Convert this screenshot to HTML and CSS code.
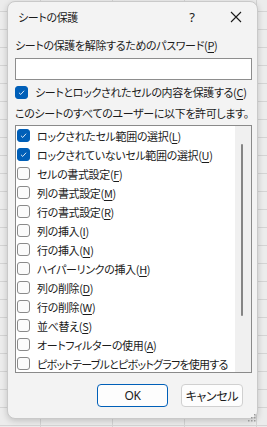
FILE: index.html
```html
<!DOCTYPE html>
<html lang="ja">
<head>
<meta charset="utf-8">
<link rel="stylesheet" href="styles.css">
</head>
<body>
<div class="desk">
  <div class="dialog">
    <div class="titlebar">
      <span class="title">シートの保護</span>
      <span class="help">?</span>
      <span class="close"><svg width="12" height="12" viewBox="0 0 12 12"><path d="M1 1L11 11M11 1L1 11" stroke="#1a1a1a" stroke-width="1.1" fill="none"/></svg></span>
    </div>
    <div class="body">
      <div class="label">シートの保護を解除するためのパスワード(<u>P</u>)</div>
      <div class="input"></div>
      <div class="row main-check"><span class="cb on"><svg viewBox="0 0 13 13"><path d="M3.5 6.8L5.6 8.8L9.6 4.4" stroke="#fff" stroke-width="1" fill="none"/></svg></span><span>シートとロックされたセルの内容を保護する(<u>C</u>)</span></div>
      <div class="label allow">このシートのすべてのユーザーに以下を許可します。</div>
      <div class="listbox">
        <div class="items">
          <div class="row"><span class="cb on"><svg viewBox="0 0 13 13"><path d="M3.5 6.8L5.6 8.8L9.6 4.4" stroke="#fff" stroke-width="1" fill="none"/></svg></span><span>ロックされたセル範囲の選択(<u>L</u>)</span></div>
          <div class="row"><span class="cb on"><svg viewBox="0 0 13 13"><path d="M3.5 6.8L5.6 8.8L9.6 4.4" stroke="#fff" stroke-width="1" fill="none"/></svg></span><span>ロックされていないセル範囲の選択(<u>U</u>)</span></div>
          <div class="row"><span class="cb"></span><span>セルの書式設定(<u>F</u>)</span></div>
          <div class="row"><span class="cb"></span><span>列の書式設定(<u>M</u>)</span></div>
          <div class="row"><span class="cb"></span><span>行の書式設定(<u>R</u>)</span></div>
          <div class="row"><span class="cb"></span><span>列の挿入(<u>I</u>)</span></div>
          <div class="row"><span class="cb"></span><span>行の挿入(<u>N</u>)</span></div>
          <div class="row"><span class="cb"></span><span>ハイパーリンクの挿入(<u>H</u>)</span></div>
          <div class="row"><span class="cb"></span><span>列の削除(<u>D</u>)</span></div>
          <div class="row"><span class="cb"></span><span>行の削除(<u>W</u>)</span></div>
          <div class="row"><span class="cb"></span><span>並べ替え(<u>S</u>)</span></div>
          <div class="row"><span class="cb"></span><span>オートフィルターの使用(<u>A</u>)</span></div>
          <div class="row"><span class="cb"></span><span class="tight">ピボットテーブルとピボットグラフを使用する</span></div>
        </div>
        <div class="scroll"><div class="thumb"></div></div>
      </div>
      <div class="buttons">
        <div class="btn ok">OK</div>
        <div class="btn">キャンセル</div>
      </div>
    </div>
    <div class="grip"><svg width="8" height="8" viewBox="0 0 8 8" fill="#9a9a9a"><rect x="6" y="0" width="1.5" height="1.5"/><rect x="3" y="3" width="1.5" height="1.5"/><rect x="6" y="3" width="1.5" height="1.5"/><rect x="0" y="6" width="1.5" height="1.5"/><rect x="3" y="6" width="1.5" height="1.5"/><rect x="6" y="6" width="1.5" height="1.5"/></svg></div>
  </div>
</div>
</body>
</html>
```
FILE: styles.css
```css
html, body {
  margin: 0;
  padding: 0;
}
body {
  width: 267px;
  height: 427px;
  overflow: hidden;
  font-family: "Noto Sans CJK JP", "Noto Sans", sans-serif;
  font-size: 11px;
  letter-spacing: -0.35px;
  color: #1b1b1b;
  font-feature-settings: "palt";
}
.desk {
  height: 427px;
  box-sizing: border-box;
  padding: 1px 9px 0 7px;
  background-color: #ececec;
  background-image:
    repeating-linear-gradient(to right, transparent 0 40px, #d4d4d4 40px 41px, transparent 41px 72px),
    repeating-linear-gradient(to bottom, transparent 0 11px, #d4d4d4 11px 12px, transparent 12px 18px);
}
.dialog {
  position: relative;
  width: 251px;
  height: 418px;
  box-sizing: border-box;
  background: #f3f3f3;
  border: 1px solid #c9c9c9;
  border-radius: 8px;
  box-shadow: 0 2px 6px rgba(0,0,0,0.18);
  display: flex;
  flex-direction: column;
}
.titlebar {
  height: 29px;
  display: flex;
  align-items: center;
  padding-left: 10px;
}
.title {
  flex: 1;
  padding-top: 1px;
}
.help {
  width: 14px;
  text-align: center;
  margin-right: 31px;
  font-family: "Noto Sans", sans-serif;
  font-size: 13px;
}
.close {
  width: 12px;
  height: 12px;
  margin-right: 15px;
  display: flex;
}
.body {
  padding: 4px 5px 0 7px;
  display: flex;
  flex-direction: column;
}
.label {
  height: 20px;
  line-height: 20px;
  white-space: nowrap;
}
.input {
  margin-top: 3px;
  height: 22px;
  box-sizing: border-box;
  background: #fff;
  border: 1px solid #8d8d8d;
}
.row {
  display: flex;
  align-items: center;
  white-space: nowrap;
  gap: 7px;
}
.main-check {
  height: 22px;
  margin-top: 1px;
}
.allow {
  height: 21px;
  line-height: 21px;
}
.cb {
  flex: none;
  width: 13px;
  height: 13px;
  box-sizing: border-box;
  border: 1px solid #8a8a8a;
  border-radius: 3px;
  background: #fbfbfb;
  display: flex;
}
.cb.on {
  background: #005fb8;
  border-color: #005fb8;
}
.cb svg {
  width: 11px;
  height: 11px;
}
.tight {
  letter-spacing: -0.75px;
}
u {
  text-decoration-thickness: 1px;
  text-underline-offset: 2px;
}
.listbox {
  margin-top: 1px;
  height: 248px;
  box-sizing: border-box;
  border: 1px solid #8a8a8a;
  background: #fff;
  display: flex;
  overflow: hidden;
}
.items {
  flex: 1;
  min-width: 0;
  overflow: hidden;
  padding-left: 1px;
}
.items .row {
  height: 19px;
}
.scroll {
  flex: none;
  width: 16px;
  background: #f0f0f0;
}
.thumb {
  margin: 18px 0 0 6px;
  width: 2px;
  height: 172px;
  background: #858585;
  border-radius: 1px;
}
.buttons {
  margin-top: 11px;
  display: flex;
  justify-content: flex-end;
  gap: 13px;
  padding-right: 9px;
}
.btn {
  height: 23px;
  box-sizing: border-box;
  border: 1px solid #d0d0d0;
  border-radius: 4px;
  background: #fdfdfd;
  display: flex;
  align-items: center;
  justify-content: center;
  width: 62px;
  font-size: 12px;
}
.btn.ok {
  width: 71px;
  border-color: #005fb8;
  font-family: "Noto Sans", sans-serif;
}
.grip {
  position: absolute;
  right: 1px;
  bottom: 1px;
  width: 8px;
  height: 8px;
}
```
